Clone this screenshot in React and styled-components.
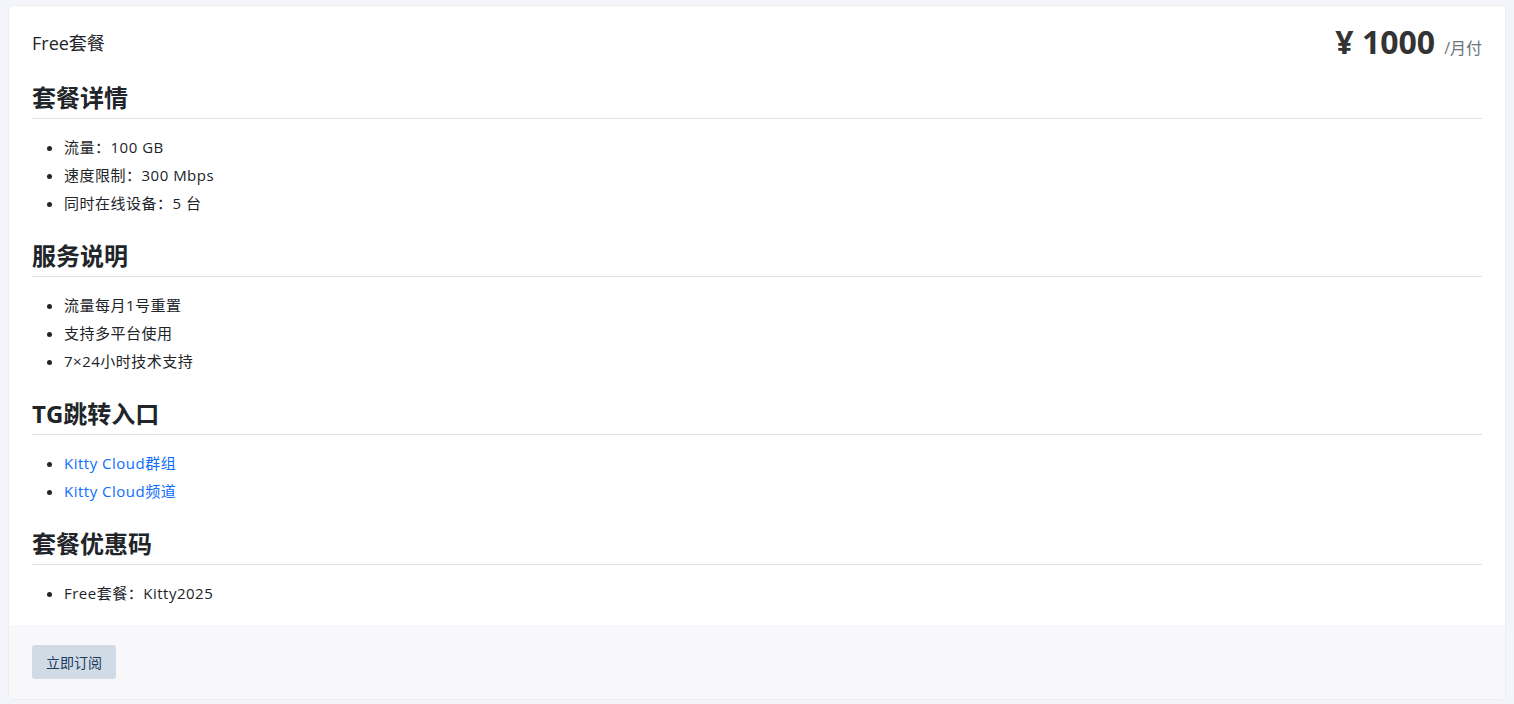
import React from 'react';
import styled, { createGlobalStyle } from 'styled-components';

const GlobalStyle = createGlobalStyle`
  html, body {
    margin: 0;
    padding: 0;
    background: #f4f5fa;
  }
  body {
    font-family: "Open Sans", "Noto Sans CJK SC", sans-serif;
    color: #212529;
  }
`;

const plan = {
  name: 'Free套餐',
  price: '1000',
  period: '/月付',
  sections: [
    { title: '套餐详情', items: ['流量：100 GB', '速度限制：300 Mbps', '同时在线设备：5 台'] },
    { title: '服务说明', items: ['流量每月1号重置', '支持多平台使用', '7×24小时技术支持'] },
    {
      title: 'TG跳转入口',
      links: true,
      items: ['Kitty Cloud群组', 'Kitty Cloud频道'],
    },
    { title: '套餐优惠码', items: ['Free套餐：Kitty2025'] },
  ],
};

function App() {
  return (
    <>
      <GlobalStyle />
      <Page>
        <Card>
          <Body>
            <Header>
              <PlanName>{plan.name}</PlanName>
              <Price>
                ¥ {plan.price}
                <Period>{plan.period}</Period>
              </Price>
            </Header>
            {plan.sections.map((s) => (
              <Section key={s.title}>
                <SectionTitle>{s.title}</SectionTitle>
                <List>
                  {s.items.map((it) => (
                    <Item key={it}>
                      {s.links ? <Link href="#">{it}</Link> : it}
                    </Item>
                  ))}
                </List>
              </Section>
            ))}
          </Body>
          <Footer>
            <SubscribeButton>立即订阅</SubscribeButton>
          </Footer>
        </Card>
      </Page>
    </>
  );
}

export default App;

const Page = styled.div`
  padding: 5px 8px 5px 8px;
`;

const Card = styled.div`
  background: #fff;
  border: 1px solid #eceef4;
  border-radius: 4px;
  overflow: hidden;
`;

const Body = styled.div`
  padding: 23px 23px 18px 23px;
`;

const Header = styled.div`
  display: flex;
  justify-content: space-between;
  align-items: flex-start;
  height: 30px;
`;

const PlanName = styled.div`
  font-size: 18px;
  line-height: 28px;
  color: #212529;
`;

const Price = styled.div`
  font-size: 32px;
  font-weight: 700;
  color: #333;
  line-height: 26px;
  white-space: nowrap;
`;

const Period = styled.span`
  font-size: 16px;
  font-weight: 400;
  color: #6c757d;
  margin-left: 9px;
`;

const Section = styled.div`
  margin-top: 24px;
`;

const SectionTitle = styled.h2`
  margin: 0;
  font-size: 24px;
  font-weight: 700;
  line-height: 29px;
  padding-bottom: 6px;
  border-bottom: 1px solid #dee2e6;
  color: #212529;
`;

const List = styled.ul`
  margin: 14px 0 0 0;
  padding-left: 32px;
`;

const Item = styled.li`
  font-size: 15px;
  letter-spacing: 0.5px;
  line-height: 28px;
  color: #212529;
`;

const Link = styled.a`
  color: #0d6efd;
  text-decoration: none;
`;

const Footer = styled.div`
  background: #f8f8fb;
  padding: 20px 23px;
`;

const SubscribeButton = styled.button`
  font-family: "Open Sans", "Noto Sans CJK SC", sans-serif;
  font-size: 14px;
  color: #1c3b5e;
  background: #d0dbe6;
  border: none;
  border-radius: 3px;
  height: 34px;
  width: 84px;
  padding: 0;
  cursor: pointer;
`;
